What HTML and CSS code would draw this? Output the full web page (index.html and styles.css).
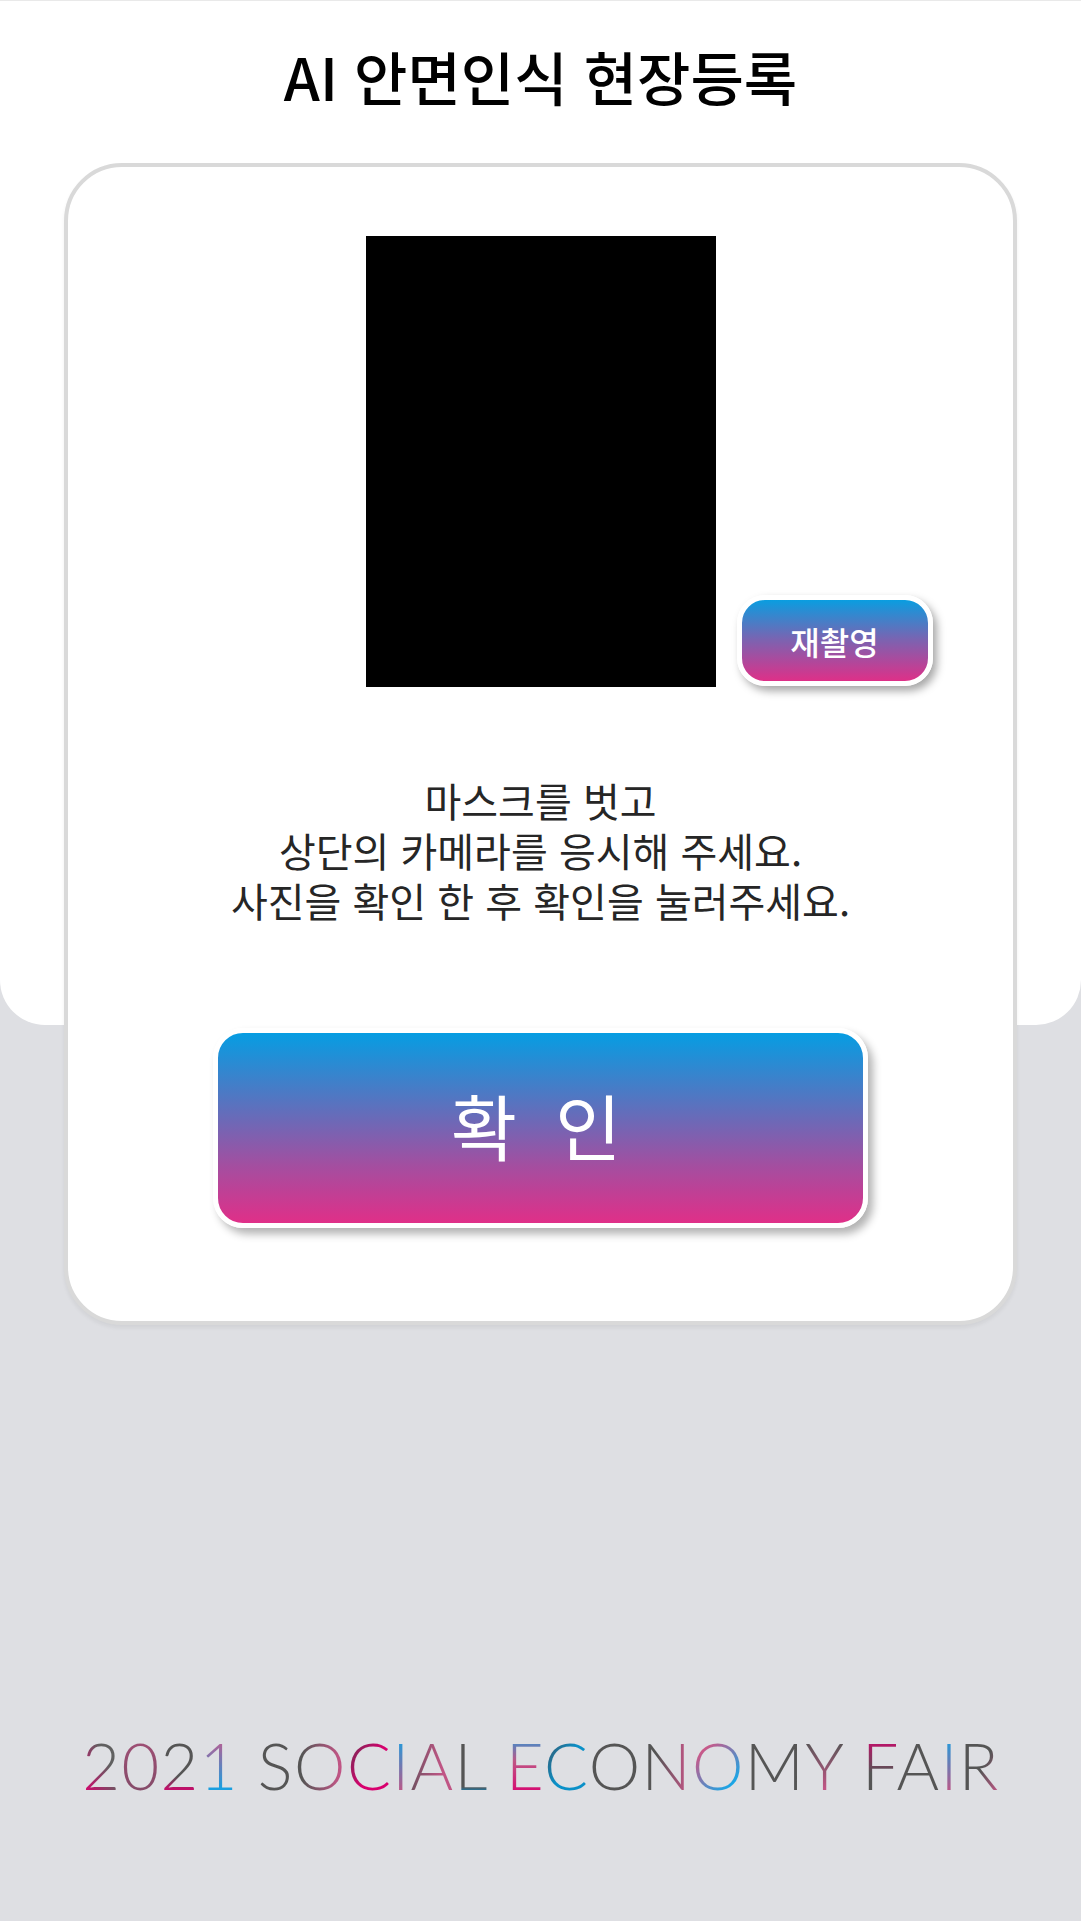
FILE: index.html
```html
<!DOCTYPE html>
<html lang="ko">
<head>
<meta charset="utf-8">
<title>AI 안면인식 현장등록</title>
<link rel="stylesheet" href="styles.css">
</head>
<body>
<div class="top">
  <h1 class="title">AI 안면인식 현장등록</h1>
  <section class="card">
    <div class="photo">
      <button class="retake" type="button">재촬영</button>
    </div>
    <p class="guide"><span class="line">마스크를 벗고</span><span class="line">상단의 카메라를 응시해 주세요.</span><span class="line">사진을 확인 한 후 확인을 눌러주세요.</span></p>
    <button class="confirm" type="button">확 인</button>
  </section>
</div>
<footer class="brand"><span class="l l-2a">2</span><span class="l l-0">0</span><span class="l l-2b">2</span><span class="l l-1">1</span> <span class="l l-gray">S</span><span class="l l-o1">O</span><span class="l l-c1">C</span><span class="l l-i">I</span><span class="l l-a1">A</span><span class="l l-l">L</span> <span class="l l-e">E</span><span class="l l-c2">C</span><span class="l l-gray">O</span><span class="l l-n">N</span><span class="l l-o2">O</span><span class="l l-gray">M</span><span class="l l-y">Y</span> <span class="l l-f">F</span><span class="l l-gray">A</span><span class="l l-i">I</span><span class="l l-r">R</span></footer>
</body>
</html>
```

FILE: styles.css
```css
html, body {
  margin: 0;
  padding: 0;
}

body {
  background: #dedfe3;
  font-family: "Noto Sans CJK KR", "Noto Sans", sans-serif;
  min-height: 1921px;
}

.top {
  display: flow-root;
  background: #ffffff;
  border-top: 1px solid #e9e9e9;
  border-radius: 0 0 45px 45px;
}

.title {
  margin: 0;
  padding-top: 41px;
  font-size: 58px;
  line-height: 68px;
  font-weight: 500;
  text-align: center;
  color: #000;
}

.card {
  box-sizing: border-box;
  width: 953px;
  margin: 53px auto -300px;
  background: #ffffff;
  border: 4px solid #d9d9d9;
  border-radius: 58px;
  box-shadow: 0 3px 4px rgba(0, 0, 0, 0.06);
  padding: 69px 0 93px;
  display: flex;
  flex-direction: column;
  align-items: center;
}

.photo {
  position: relative;
  width: 350px;
  height: 451px;
  background: #000;
}

.retake {
  position: absolute;
  left: calc(100% + 21px);
  bottom: 1px;
  box-sizing: border-box;
  width: 196px;
  height: 91px;
  padding: 0;
  border: 5px solid #fff;
  border-radius: 28px;
  background: linear-gradient(#0a9de0, #7d62b0 50%, #de3088);
  color: #fff;
  font-family: inherit;
  font-size: 32px;
  font-weight: 500;
  box-shadow: 4px 5px 8px rgba(0, 0, 0, 0.35);
}

.guide {
  margin: 88px 0 0;
  font-size: 40px;
  line-height: 50px;
  color: #262626;
  text-align: center;
  font-weight: 400;
}

.line {
  display: block;
  height: 50px;
}

.confirm {
  margin-top: 103px;
  box-sizing: border-box;
  width: 655px;
  height: 200px;
  padding: 0 0 10px;
  border: 5px solid #fff;
  border-radius: 30px;
  background: linear-gradient(#069de2, #6a6ab8 45%, #a44ea0 70%, #e02f88);
  color: #fff;
  font-family: inherit;
  font-size: 72px;
  font-weight: 400;
  letter-spacing: 9px;
  box-shadow: 5px 6px 8px rgba(0, 0, 0, 0.3);
}

.brand {
  margin-top: 700px;
  text-align: center;
  font-family: "Lato", "Noto Sans", sans-serif;
  font-weight: 300;
  font-size: 65px;
  line-height: 80px;
  letter-spacing: 1.4px;
  padding-left: 1px;
  color: #555;
}

.l {
  -webkit-background-clip: text;
  background-clip: text;
  -webkit-text-fill-color: transparent;
  background-color: #555;
}

.l-gray { background-image: linear-gradient(#555, #555); }
.l-2a { background-image: linear-gradient(to top right, #d8006e 10%, #606060 60%); }
.l-0 { background-image: linear-gradient(#a65078, #7e4a66); }
.l-2b { background-image: linear-gradient(#555 65%, #c0106a 80%); }
.l-1 { background-image: linear-gradient(#d05588 10%, #1a9fe0 80%); }
.l-o1 { background-image: linear-gradient(to right, #555 15%, #c05585 85%); }
.l-c1 { background-image: linear-gradient(to bottom right, #6a3050 10%, #d8006e 55%); }
.l-i { background-image: linear-gradient(#1a9fe0 15%, #c05585 85%); }
.l-a1 { background-image: linear-gradient(to right, #705060, #c05585 70%); }
.l-l { background-image: linear-gradient(#555 78%, #1580b5 84%); }
.l-e { background-image: linear-gradient(#1a9fe0 10%, #c05585 45%, #d8006e 90%); }
.l-c2 { background-image: linear-gradient(to bottom right, #3a5566 10%, #0a90c8 50%); }
.l-n { background-image: linear-gradient(to right, #555 30%, #c05585 90%); }
.l-o2 { background-image: linear-gradient(135deg, #d05585 25%, #1aa6e6 75%); }
.l-y { background-image: linear-gradient(#555 20%, #c05585 80%); }
.l-f { background-image: linear-gradient(#d8006e 10%, #555 60%); }
.l-r { background-image: linear-gradient(to bottom right, #555 55%, #c05585 90%); }
```
